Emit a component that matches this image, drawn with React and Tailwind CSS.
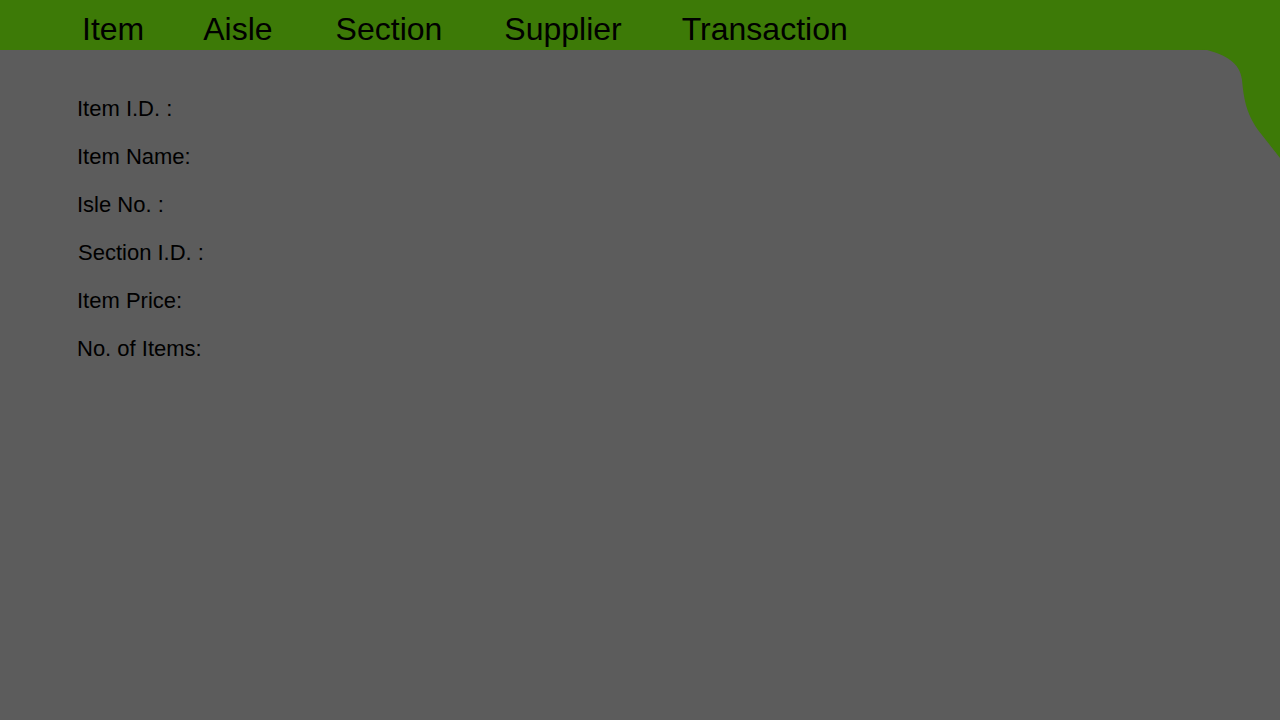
import React from "react";

export default function App() {
  const nav = [
    ["Item", ""],
    ["Aisle", "ml-[59px]"],
    ["Section", "ml-[63px]"],
    ["Supplier", "ml-[62px]"],
    ["Transaction", "ml-[60px]"],
  ];
  const labels = ["Item I.D. :", "Item Name:", "Isle No. :", "Section I.D. :", "Item Price:", "No. of Items:"];
  return (
    <div
      className="relative w-[1280px] h-[720px] bg-[#5c5c5c] overflow-hidden text-black"
      style={{ fontFamily: '"Liberation Sans", Arial, sans-serif' }}
    >
      <header className="h-[50px] bg-[#3d7a07] flex items-start pl-[82px] pt-[11px]">
        {nav.map(([n, c]) => (
          <span key={n} className={`text-[32px] leading-[normal] cursor-pointer ${c}`}>
            {n}
          </span>
        ))}
      </header>
      <svg
        className="absolute top-0 left-0 pointer-events-none"
        width="1280"
        height="720"
        viewBox="0 0 1280 720"
      >
        <path
          d="M1200 49 L1207 50 C1225 55 1240 62 1242 80 C1244 100 1246 112 1258 130 L1280 158 L1280 49 Z"
          fill="#3d7a07"
        />
      </svg>
      <div className="flex flex-col pl-[77px] pt-[35px]">
        {labels.map((l, i) => (
          <div key={l} className={`text-[22px] leading-[48px] ${i === 3 ? "pl-[1px]" : ""}`}>
            {l}
          </div>
        ))}
      </div>
    </div>
  );
}
